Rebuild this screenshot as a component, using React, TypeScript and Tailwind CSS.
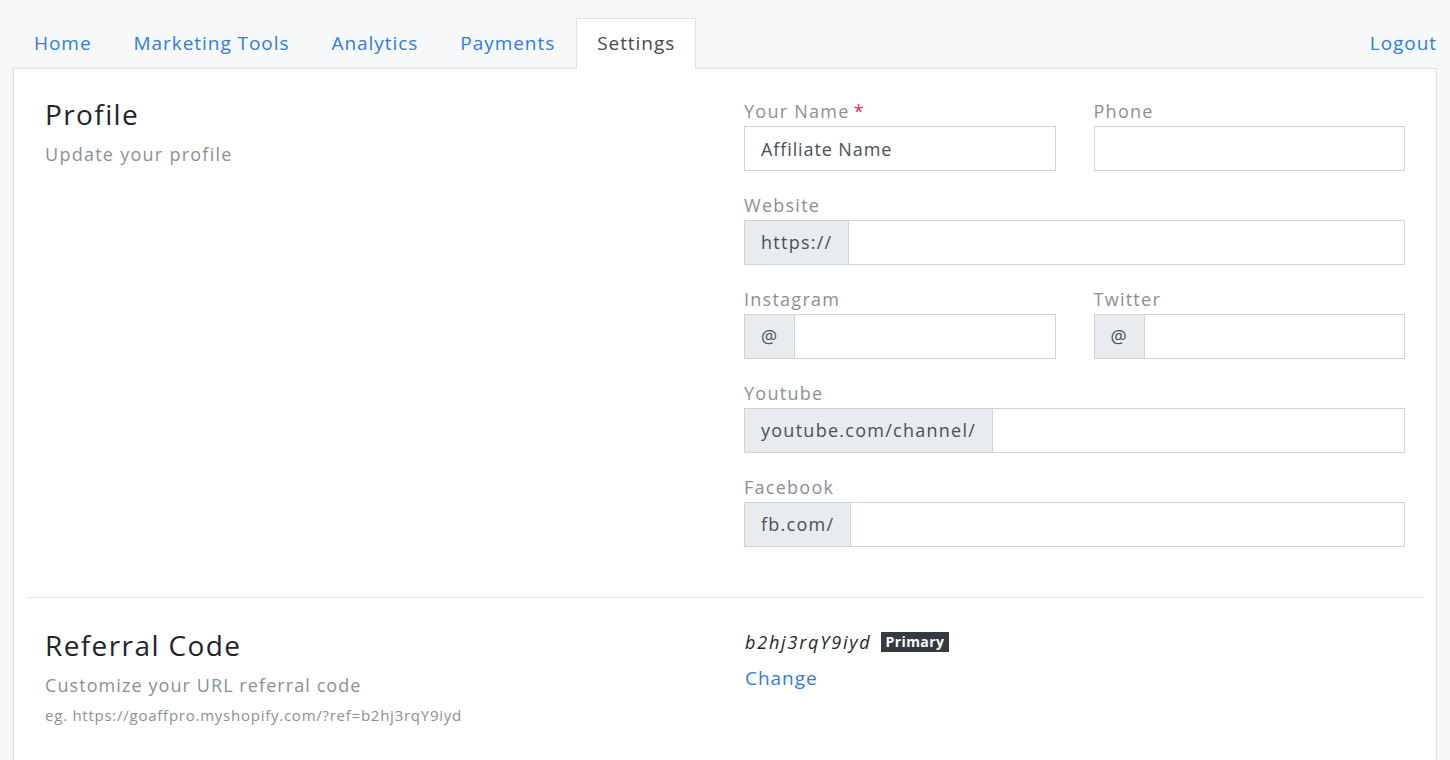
import React from "react";

const tabs = ["Home", "Marketing Tools", "Analytics", "Payments", "Settings"];

const Label = ({ children, required }: { children: React.ReactNode; required?: boolean }) => (
	<label className="block text-[18px] leading-[24px] tracking-[0.07em] text-[#8a9099] mb-[3px]">
		{children}
		{required && <span className="text-[#f0284a] ml-1">*</span>}
	</label>
);

const TextInput = ({ value }: { value?: string }) => (
	<input
		type="text"
		defaultValue={value}
		className="block w-full h-[45px] border border-[#ced4da] bg-white px-4 text-[18px] tracking-[0.05em] text-[#495057] outline-none"
	/>
);

const AddonInput = ({ addon }: { addon: string }) => (
	<div className="flex h-[45px] border border-[#ced4da]">
		<span className="flex items-center px-4 bg-[#e9ecef] border-r border-[#ced4da] text-[18px] tracking-[0.07em] text-[#495057] whitespace-nowrap">
			{addon}
		</span>
		<input type="text" className="flex-1 min-w-0 bg-white px-4 text-[18px] text-[#495057] outline-none" />
	</div>
);

export default function App() {
	return (
		<div
			className="min-h-screen bg-[#f7f8fa] px-[13px] pt-[17px]"
			style={{ fontFamily: "'Open Sans', 'Liberation Sans', sans-serif" }}
		>
			<div className="flex items-end justify-between">
				<ul className="flex -mb-px relative z-10">
					{tabs.map((t) => (
						<li key={t}>
							<a
								href="#"
								className={
									t === "Settings"
										? "block h-[51px] px-[20px] leading-[48px] text-[19px] tracking-[0.05em] text-[#444a50] bg-white border border-[#dee2e6] border-b-white"
										: "block h-[51px] px-[20px] leading-[48px] text-[19px] tracking-[0.05em] text-[#2f7de1] border border-transparent"
								}
							>
								{t}
							</a>
						</li>
					))}
				</ul>
				<a href="#" className="text-[19px] leading-[52px] h-[51px] tracking-[0.05em] text-[#2f7de1]">
					Logout
				</a>
			</div>

			<div className="bg-white border border-[#dee2e6] px-3 shadow-[-2px_0_4px_rgba(0,0,0,0.04)]">
				<div className="flex pt-[30px] pb-[50px] border-b border-[#e3e6ea]">
					<div className="w-1/2 px-[19px]">
						<h2 className="text-[28px] leading-[30px] tracking-[0.05em] text-[#212529]">Profile</h2>
						<p className="mt-[12px] text-[18px] leading-[27px] tracking-[0.07em] text-[#8a9099]">Update your profile</p>
					</div>
					<div className="w-1/2 px-[19px] flex flex-col gap-[22px]">
						<div className="grid grid-cols-2 gap-[38px]">
							<div>
								<Label required>Your Name</Label>
								<TextInput value="Affiliate Name" />
							</div>
							<div>
								<Label>Phone</Label>
								<TextInput />
							</div>
						</div>
						<div>
							<Label>Website</Label>
							<AddonInput addon="https://" />
						</div>
						<div className="grid grid-cols-2 gap-[38px]">
							<div>
								<Label>Instagram</Label>
								<AddonInput addon="@" />
							</div>
							<div>
								<Label>Twitter</Label>
								<AddonInput addon="@" />
							</div>
						</div>
						<div>
							<Label>Youtube</Label>
							<AddonInput addon="youtube.com/channel/" />
						</div>
						<div>
							<Label>Facebook</Label>
							<AddonInput addon="fb.com/" />
						</div>
					</div>
				</div>

				<div className="flex pt-[32px] pb-[40px]">
					<div className="w-1/2 px-[19px]">
						<h2 className="text-[28px] leading-[30px] tracking-[0.05em] text-[#212529]">Referral Code</h2>
						<p className="mt-[12px] text-[18px] leading-[27px] tracking-[0.06em] text-[#8a9099]">
							Customize your URL referral code
						</p>
						<p className="mt-[5px] text-[15px] leading-[22px] tracking-[0.05em] text-[#8a9099]">
							eg. https://goaffpro.myshopify.com/?ref=b2hj3rqY9iyd
						</p>
					</div>
					<div className="w-1/2 px-[20px]">
						<div className="flex items-center gap-[9px]">
							<span className="italic text-[18px] leading-[24px] tracking-[0.1em] text-[#212529]">b2hj3rqY9iyd</span>
							<span className="bg-[#343a40] text-white text-[14px] font-bold leading-[20px] px-[5px] tracking-[0.03em]">Primary</span>
						</div>
						<a href="#" className="block mt-[11px] text-[19px] leading-[26px] tracking-[0.05em] text-[#2f7de1]">
							Change
						</a>
					</div>
				</div>
			</div>
		</div>
	);
}
